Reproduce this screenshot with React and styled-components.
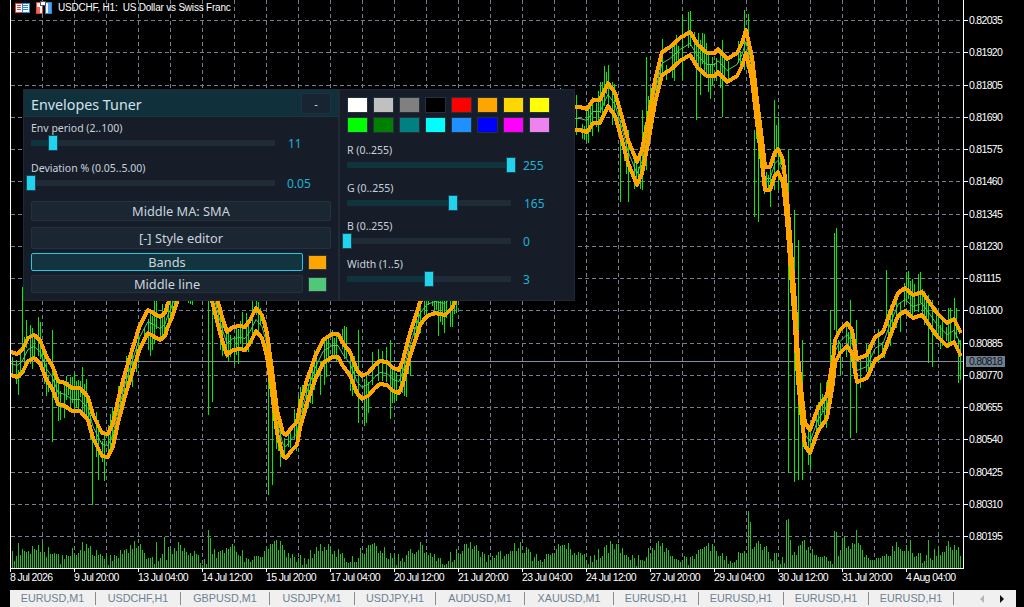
import React from 'react';
import styled, { createGlobalStyle } from 'styled-components';

const GlobalStyle = createGlobalStyle`
  html, body {
    margin: 0;
    padding: 0;
    background: #000;
  }
`;

const UI_FONT = '"Noto Sans", "Open Sans", sans-serif';
const MT_FONT = '"Liberation Sans", Arial, sans-serif';

const Terminal = styled.div`
  position: relative;
  width: 1024px;
  height: 607px;
  overflow: hidden;
  background: #000;
  display: flex;
  flex-direction: column;
`;

const ChartRow = styled.div`
  display: flex;
  height: 569px;
  padding-left: 10px;
`;

const Plot = styled.svg`
  display: block;
  flex: none;
`;

const PriceScale = styled.div`
  flex: none;
  width: 60px;
  padding-top: 4px;
  box-sizing: border-box;
  position: relative;
`;

const PriceLabel = styled.div`
  position: relative;
  height: 32.25px;
  padding-left: 5px;
  color: #fff;
  font: 10.5px/32.25px ${MT_FONT};
  letter-spacing: -0.7px;

  &::before {
    content: '';
    position: absolute;
    left: 0;
    top: 16px;
    width: 4px;
    height: 1px;
    background: #fff;
  }
`;

const PriceTag = styled.div`
  position: absolute;
  left: 2px;
  top: 356px;
  width: 39px;
  height: 11px;
  background: #708090;
  color: #10161d;
  font: 10.5px/11px ${MT_FONT};
  letter-spacing: -0.7px;
  text-align: center;
`;

const TimeScale = styled.div`
  display: flex;
  height: 21px;
  padding-left: 10px;
`;

const TimeLabel = styled.div`
  position: relative;
  flex: none;
  width: 64px;
  color: #fff;
  white-space: nowrap;
  font: 10.5px/16px ${MT_FONT};
  letter-spacing: -0.6px;

  &::before {
    content: '';
    position: absolute;
    left: 0;
    top: -1px;
    width: 1px;
    height: 4px;
    background: #fff;
  }
`;

const TabStrip = styled.div`
  position: relative;
  display: flex;
  align-items: center;
  margin-left: 10px;
  width: 1006px;
  height: 17px;
  background: #f0f0f0;
`;

const Tab = styled.div`
  flex: none;
  width: ${p => p.$w}px;
  box-sizing: border-box;
  height: 13px;
  border-right: 1px solid #8c8c8c;
  color: #6f7f90;
  text-align: center;
  font: 10.8px/13px ${MT_FONT};
`;

const TabArrows = styled.div`
  position: absolute;
  right: 12px;
  top: 5px;
  display: flex;
  gap: 16px;
`;

const TabArrow = styled.div`
  width: 0;
  height: 0;
  border-top: 4px solid transparent;
  border-bottom: 4px solid transparent;
  ${p => p.$left
    ? 'border-right: 4px solid #b5b5b5;'
    : 'border-left: 4px solid #111;'}
`;

const ChartTitle = styled.div`
  position: absolute;
  left: 15px;
  top: 1px;
  height: 13px;
  display: flex;
  align-items: center;
  gap: 6px;
  white-space: pre;
  color: #fff;
  font: 10px/13px ${MT_FONT};
  letter-spacing: -0.2px;
`;

/* ---- tuner panel ---- */

const Panel = styled.div`
  position: absolute;
  left: 23px;
  top: 89px;
  width: 552px;
  height: 212px;
  box-sizing: border-box;
  display: flex;
  background: #161d29;
  border: 1px solid #1d2936;
  font-family: ${UI_FONT};
`;

const LeftColumn = styled.div`
  flex: none;
  width: 316px;
  box-sizing: border-box;
  border-right: 2px solid #1f2b37;
`;

const RightColumn = styled.div`
  flex: 1;
  padding: 7px 0 0 7px;
  display: flex;
  flex-direction: column;
  gap: 8px;
`;

const TitleBar = styled.div`
  height: 27px;
  box-sizing: border-box;
  padding: 3px 7px 0;
  display: flex;
  justify-content: space-between;
  align-items: flex-start;
  background: #10303b;
  border-bottom: 1px solid #1c3543;
`;

const Title = styled.div`
  color: #d3e2ec;
  font-size: 14.3px;
  line-height: 20px;
  padding-top: 2px;
`;

const MinButton = styled.div`
  width: 30px;
  height: 21px;
  box-sizing: border-box;
  background: #182431;
  border: 1px solid #213040;
  border-radius: 2px;
  color: #cfd8e0;
  text-align: center;
  font-size: 11px;
  line-height: 19px;
`;

const LeftBody = styled.div`
  padding: 4px 7px 0;
  display: flex;
  flex-direction: column;
`;

const SliderBlock = styled.div`
  margin-bottom: ${p => p.$after || 0}px;
`;

const SliderLabel = styled.div`
  height: 14px;
  color: #c9d2da;
  font-size: 10.5px;
  line-height: 14px;
  white-space: nowrap;
`;

const SliderRow = styled.div`
  display: flex;
  align-items: center;
  height: 16px;
`;

const Track = styled.div`
  position: relative;
  flex: none;
  width: ${p => p.$w}px;
  height: 6px;
  background: #1f2c38;
`;

const TrackFill = styled.div`
  height: 100%;
  background: #10343e;
`;

const Thumb = styled.div`
  position: absolute;
  top: -5px;
  width: 10px;
  height: 16px;
  margin-left: -5px;
  box-sizing: border-box;
  background: #22d3ee;
  border: 1px solid #1a4555;
`;

const SliderValue = styled.div`
  margin-left: ${p => p.$gap}px;
  padding-top: 2px;
  color: #1fb4d4;
  font-size: 12px;
  line-height: 14px;
`;

const WideButton = styled.div`
  flex: none;
  height: ${p => p.$h}px;
  width: ${p => p.$w || 300}px;
  margin-bottom: ${p => p.$after || 0}px;
  box-sizing: border-box;
  background: ${p => (p.$active ? '#11343f' : '#1b2633')};
  border: 1px solid ${p => (p.$active ? '#22c8e4' : '#243240')};
  border-radius: 2px;
  color: #c9d4dd;
  text-align: center;
  font-size: 12.8px;
  line-height: ${p => p.$h - 2}px;
`;

const StyleRow = styled.div`
  display: flex;
  align-items: center;
  gap: 5px;
  margin-bottom: 4px;
`;

const ColorChip = styled.div`
  flex: none;
  width: 19px;
  height: 15px;
  box-sizing: border-box;
  background: ${p => p.$color};
  border: 1px solid #2a3642;
`;

const Palette = styled.div`
  display: grid;
  grid-template-columns: repeat(8, 21px);
  grid-auto-rows: 16px;
  gap: 4px 5px;
  margin-bottom: 2px;
`;

const PaletteChip = styled.div`
  box-sizing: border-box;
  background: ${p => p.$color};
  border: 1px solid #25303d;
`;

/* ---- chart data ---- */

const UPPER = [
  [11, 352], [17, 354], [22, 350], [28, 338], [34, 335], [40, 340], [47, 358], [52, 365], [58, 381], [65, 383],
  [72, 388], [80, 388], [88, 397], [93, 415], [102, 433], [108, 434], [113, 423], [118, 400], [125, 373], [133, 347],
  [140, 325], [148, 310], [160, 317], [165, 313], [168, 303], [171, 297], [180, 270], [205, 250], [218, 302], [222, 317],
  [227, 332], [233, 327], [240, 326], [245, 327], [250, 320], [256, 308], [262, 315], [267, 333], [272, 370], [277, 410],
  [283, 433], [286, 435], [292, 427], [297, 422], [300, 405], [307, 380], [315, 357], [323, 340], [332, 334], [338, 334],
  [343, 343], [350, 352], [357, 370], [362, 376], [368, 373], [375, 365], [380, 361], [387, 362], [393, 368], [399, 370],
  [403, 360], [410, 333], [417, 312], [420, 302], [427, 293], [435, 290], [445, 292], [452, 285], [455, 279], [470, 240],
  [500, 130], [575, 107], [580, 107], [587, 109], [593, 100], [600, 100], [608, 83], [615, 93], [622, 117], [628, 140],
  [637, 162], [642, 150], [648, 120], [655, 80], [662, 52], [670, 47], [680, 38], [690, 32], [698, 45], [707, 53],
  [715, 53], [718, 49], [727, 59], [737, 53], [742, 43], [746, 30], [752, 57], [757, 100], [762, 140], [765, 167],
  [770, 167], [775, 152], [778, 149], [783, 160], [787, 197], [792, 263], [795, 303], [798, 357], [802, 397], [805, 423],
  [810, 430], [818, 408], [827, 395], [833, 360], [835, 340], [840, 330], [847, 323], [852, 330], [857, 359], [867, 355],
  [875, 337], [883, 332], [890, 313], [898, 293], [905, 288], [913, 295], [922, 292], [930, 303], [937, 313], [947, 323],
  [954, 319], [961, 333],
];

const SPIKES = [
  [22, 287, 345], [92, 430, 505], [98, 420, 480], [52, 330, 442], [208, 300, 415], [212, 300, 402],
  [268, 380, 495], [272, 400, 485], [358, 330, 423], [390, 340, 419], [438, 300, 336], [444, 300, 333],
  [682, 15, 80], [735, 16, 80], [744, 10, 70], [748, 14, 60], [774, 100, 190], [778, 117, 190],
  [788, 150, 473], [794, 210, 482], [798, 240, 480], [802, 340, 480], [620, 120, 202], [628, 130, 202],
  [696, 40, 120], [722, 40, 117], [758, 140, 222], [754, 130, 217], [850, 300, 438], [856, 320, 433],
  [830, 310, 400], [834, 233, 330], [836, 228, 340], [886, 270, 320], [932, 300, 367], [928, 295, 363],
  [958, 340, 383], [960, 340, 380], [646, 57, 170], [642, 110, 190], [700, 40, 95],
];

const VOLUME_PEAKS = {
  208: 38, 210: 30, 164: 31, 156: 26, 748: 57, 750: 46, 786: 48, 788: 49, 790: 28,
  834: 37, 836: 36, 844: 32, 846: 20, 856: 38, 842: 30, 910: 28, 928: 28, 12: 17, 18: 25,
};

function makeRandom(seed) {
  let s = seed;
  return () => {
    s = (s * 1664525 + 1013904223) % 4294967296;
    return s / 4294967296;
  };
}

function upperAt(x) {
  for (let i = 1; i < UPPER.length; i++) {
    if (x <= UPPER[i][0]) {
      const [x0, y0] = UPPER[i - 1];
      const [x1, y1] = UPPER[i];
      return y0 + ((y1 - y0) * (x - x0)) / (x1 - x0);
    }
  }
  return UPPER[UPPER.length - 1][1];
}

// price bars wander around the middle line, and some leave black gaps like the thin H1 bars do
function buildBars() {
  const rand = makeRandom(77);
  const spikes = {};
  SPIKES.forEach(([x, top, bottom]) => { spikes[x] = [top, bottom]; });
  let d = '';
  for (let x = 12; x <= 960; x += 2) {
    const drift = Math.sin(x / 7) * 9 + Math.sin(x / 2.3) * 6;
    const mid = upperAt(x) + 11.5 + drift;
    const up = 5 + rand() * 20;
    const down = 5 + rand() * 20;
    const skip = rand() < 0.3;
    if (spikes[x] || !skip) {
      const [top, bottom] = spikes[x] || [mid - up, mid + down];
      d += `M${x + 0.5} ${Math.round(top)}V${Math.round(bottom)}`;
    }
  }
  return d;
}

function buildVolume() {
  const rand = makeRandom(413);
  let d = '';
  for (let x = 12; x <= 960; x += 2) {
    const wave = Math.sin(((x - 24) * Math.PI * 2) / 48);
    const h = VOLUME_PEAKS[x] || Math.max(2, 15 + wave * 7 + (rand() - 0.5) * 12);
    d += `M${x + 0.5} 568V${Math.round(568 - h)}`;
  }
  return d;
}

const shifted = dy => UPPER.map(([x, y]) => `${x},${y + dy}`).join(' ');

const PRICES = [
  '0.82035', '0.81920', '0.81805', '0.81690', '0.81575', '0.81460', '0.81345', '0.81230', '0.81115',
  '0.81000', '0.80885', '0.80770', '0.80655', '0.80540', '0.80425', '0.80310', '0.80195',
];

const TIMES = [
  '8 Jul 2026', '9 Jul 20:00', '13 Jul 04:00', '14 Jul 12:00', '15 Jul 20:00', '17 Jul 04:00', '20 Jul 12:00',
  '21 Jul 20:00', '23 Jul 04:00', '24 Jul 12:00', '27 Jul 20:00', '29 Jul 04:00', '30 Jul 12:00', '31 Jul 20:00',
  '4 Aug 04:00',
];

const TABS = [
  ['EURUSD,M1', 86], ['USDCHF,H1', 85], ['GBPUSD,M1', 89], ['USDJPY,M1', 85], ['USDJPY,H1', 81], ['AUDUSD,M1', 89],
  ['XAUUSD,M1', 89], ['EURUSD,H1', 85], ['EURUSD,H1', 85], ['EURUSD,H1', 85], ['EURUSD,H1', 85],
];

const PALETTE = [
  '#ffffff', '#c0c0c0', '#808080', '#000000', '#ff0000', '#ffa500', '#ffd700', '#ffff00',
  '#00ff00', '#008000', '#008080', '#00ffff', '#1e90ff', '#0000ff', '#ff00ff', '#ee82ee',
];

const GRID_Y = PRICES.map((_, i) => Math.round(20 + i * 32.25) + 0.5);
const GRID_X = Array.from({ length: 30 }, (_, i) => 42.5 + i * 32);

function Chart() {
  return (
    <Plot width="954" height="569" viewBox="10 0 954 569">
      <g stroke="#6f8095" strokeDasharray="4 3" shapeRendering="crispEdges">
        {GRID_Y.map(y => <line key={y} x1="11" x2="963" y1={y} y2={y} />)}
        {GRID_X.map(x => <line key={x} x1={x} x2={x} y1="0" y2="568" />)}
      </g>
      <path d={buildVolume()} stroke="#22c022" fill="none" shapeRendering="crispEdges" />
      <path d={buildBars()} stroke="#00f000" fill="none" shapeRendering="crispEdges" />
      <line x1="11" x2="963" y1="361.5" y2="361.5" stroke="#8090a0" shapeRendering="crispEdges" />
      <polyline points={shifted(11.5)} fill="none" stroke="#50c878" strokeWidth="1" />
      <polyline points={shifted(0)} fill="none" stroke="#ffa500" strokeWidth="4" strokeLinejoin="round" shapeRendering="crispEdges" />
      <polyline points={shifted(23)} fill="none" stroke="#ffa500" strokeWidth="4" strokeLinejoin="round" shapeRendering="crispEdges" />
      <g fill="#fff" shapeRendering="crispEdges">
        <rect x="10" y="0" width="1" height="569" />
        <rect x="963" y="0" width="1" height="569" />
        <rect x="10" y="568" width="954" height="1" />
      </g>
    </Plot>
  );
}

function SymbolIcons() {
  return (
    <>
      <svg width="15" height="10" viewBox="0 0 15 10" style={{ flex: 'none' }} shapeRendering="crispEdges">
        <rect x="0" y="0" width="15" height="10" fill="#f4f7fb" />
        <path d="M0.5 0v10M0 0.5h7M0 9.5h7" stroke="#e8412f" />
        <path d="M14.5 0v10M7 0.5h8M7 9.5h8" stroke="#2d86d8" />
        <path d="M2 2.5h4M2 4.5h4M2 6.5h4" stroke="#e8412f" />
        <path d="M8 2.5h5M8 4.5h5M8 6.5h5" stroke="#2d86d8" />
        <path d="M7.5 1v8" stroke="#2d86d8" />
      </svg>
      <svg width="16" height="13" viewBox="0 0 16 13" style={{ flex: 'none' }} shapeRendering="crispEdges">
        <path d="M0.5 1.5h6v11h-6z" fill="#f4f7fb" stroke="#e8412f" />
        <path d="M1 6h3v6h-3z" fill="#ef6a58" />
        <path d="M9.5 1.5h6v11h-6z" fill="#f4f7fb" stroke="#2d86d8" />
        <path d="M12 2h3v10h-3z" fill="#56a6e6" />
        <rect x="4.5" y="0.5" width="5" height="4" fill="#fff" stroke="#555" />
      </svg>
    </>
  );
}

function Slider({ label, value, text, min, max, width, gap, after }) {
  const pct = ((value - min) / (max - min)) * 100;
  return (
    <SliderBlock $after={after}>
      <SliderLabel>{label}</SliderLabel>
      <SliderRow>
        <Track $w={width}>
          <TrackFill style={{ width: `${pct}%` }} />
          <Thumb style={{ left: `${pct}%` }} />
        </Track>
        <SliderValue $gap={gap}>{text || value}</SliderValue>
      </SliderRow>
    </SliderBlock>
  );
}

function TunerPanel() {
  return (
    <Panel>
      <LeftColumn>
        <TitleBar>
          <Title>Envelopes Tuner</Title>
          <MinButton>-</MinButton>
        </TitleBar>
        <LeftBody>
          <Slider label="Env period (2..100)" value={11} min={2} max={100} width={244} gap={13} after={10} />
          <Slider label="Deviation % (0.05..5.00)" value={0.05} text="0.05" min={0.05} max={5} width={244} gap={12} after={10} />
          <WideButton $h={20} $after={6}>Middle MA: SMA</WideButton>
          <WideButton $h={22} $after={4}>[-] Style editor</WideButton>
          <StyleRow>
            <WideButton $h={18} $w={272} $active>Bands</WideButton>
            <ColorChip $color="#ffa500" />
          </StyleRow>
          <StyleRow>
            <WideButton $h={18} $w={272}>Middle line</WideButton>
            <ColorChip $color="#50c878" />
          </StyleRow>
        </LeftBody>
      </LeftColumn>
      <RightColumn>
        <Palette>
          {PALETTE.map(c => <PaletteChip key={c} $color={c} />)}
        </Palette>
        <Slider label="R (0..255)" value={255} min={0} max={255} width={164} gap={12} />
        <Slider label="G (0..255)" value={165} min={0} max={255} width={164} gap={13} />
        <Slider label="B (0..255)" value={0} min={0} max={255} width={164} gap={12} />
        <Slider label="Width (1..5)" value={3} min={1} max={5} width={164} gap={12} />
      </RightColumn>
    </Panel>
  );
}

export default function App() {
  return (
    <Terminal>
      <GlobalStyle />
      <ChartRow>
        <Chart />
        <PriceScale>
          {PRICES.map(p => <PriceLabel key={p}>{p}</PriceLabel>)}
          <PriceTag>0.80818</PriceTag>
        </PriceScale>
      </ChartRow>
      <TimeScale>
        {TIMES.map(t => <TimeLabel key={t}>{t}</TimeLabel>)}
      </TimeScale>
      <TabStrip>
        {TABS.map(([name, w], i) => <Tab key={i} $w={w}>{name}</Tab>)}
        <TabArrows>
          <TabArrow $left />
          <TabArrow />
        </TabArrows>
      </TabStrip>
      <ChartTitle>
        <SymbolIcons />
        <span>USDCHF, H1:  US Dollar vs Swiss Franc</span>
      </ChartTitle>
      <TunerPanel />
    </Terminal>
  );
}
